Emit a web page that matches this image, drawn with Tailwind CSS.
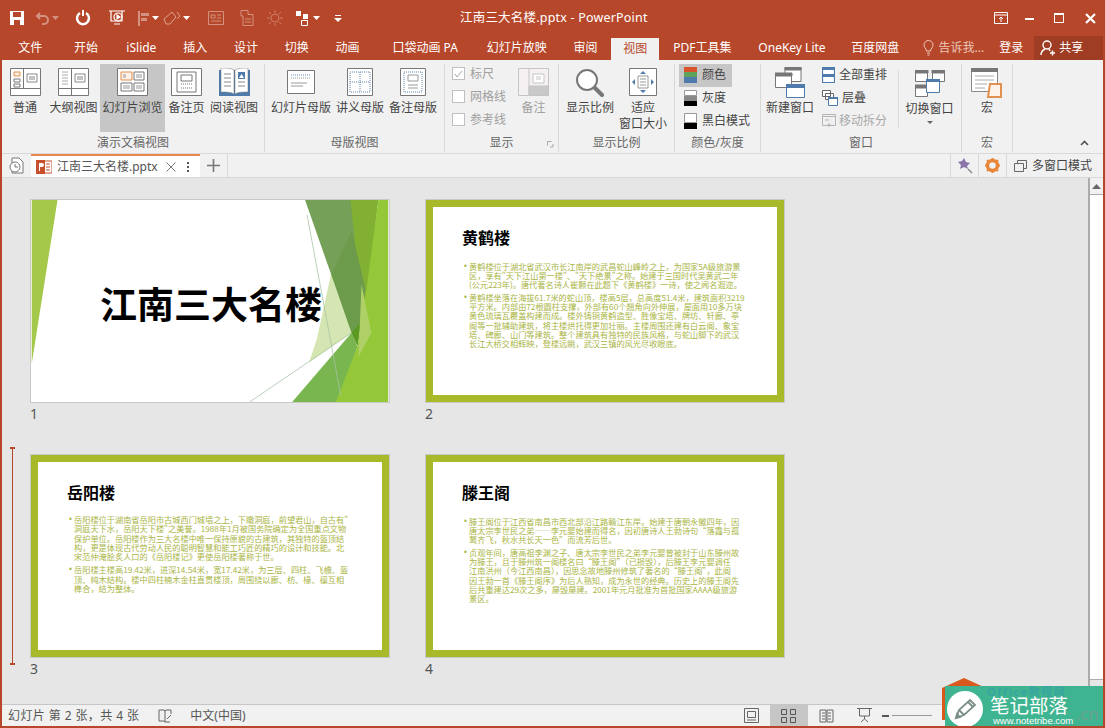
<!DOCTYPE html>
<html lang="zh-CN">
<head>
    <meta charset="UTF-8">
    <title>江南三大名楼.pptx - PowerPoint</title>
    <script src="https://cdn.jsdelivr.net/npm/@tailwindcss/browser@4"></script>
</head>
<body class="overflow-hidden bg-[#e6e6e6]">

<div class="relative w-[1105px] h-[728px] overflow-hidden flex flex-col border-x-2 border-b-2 border-[#b7472a] text-[12px] text-[#444] font-['Noto_Sans','Noto_Sans_CJK_SC',sans-serif]">

    <!-- Title bar -->
    <div class="h-[36px] shrink-0 bg-[#b7472a] flex items-center relative text-white">
        <div class="flex items-center h-full">
            <svg class="ml-[8px]" width="14" height="14" viewBox="0 0 14 14"><path d="M0 0h14v14H0z" fill="#fff"/><path d="M3 1h8v5H3z" fill="#b7472a"/><path d="M4 9h6v5H4z" fill="#b7472a"/></svg>
            <svg class="ml-[12px] opacity-40" width="14" height="14" viewBox="0 0 14 14" fill="none" stroke="#fff" stroke-width="2"><path d="M4 2 1 5l3 3M1 5h7a4 4 0 0 1 0 8H6"/></svg>
            <svg class="ml-[2px] opacity-40" width="7" height="5" viewBox="0 0 7 5"><path d="M0 0h7L3.500 4z" fill="#fff"/></svg>
            <svg class="ml-[16px]" width="16" height="16" viewBox="0 0 16 16" fill="none" stroke="#fff" stroke-width="2.500"><path d="M5 3a6 6 0 1 0 6 0"/><path d="M8 0v6" stroke-width="2"/></svg>
            <svg class="ml-[17px]" width="18" height="18" viewBox="0 0 18 18" fill="none" stroke="#fff" stroke-width="1.200"><path d="M1 2h16M3 2v10h11V2"/><circle cx="10" cy="8" r="4"/><path d="m9 6 3 2-3 2zM6 15h6" fill="#fff"/></svg>
            <svg class="ml-[11px] opacity-40" width="13" height="15" viewBox="0 0 13 15" fill="#fff"><path d="M1 0h2v15H1zM4 2h8v3H4zM4 7h6v3H4z"/></svg>
            <svg class="ml-[2px]" width="7" height="5" viewBox="0 0 7 5"><path d="M0 0h7L3.500 4z" fill="#fff"/></svg>
            <svg class="ml-[4px] opacity-50" width="18" height="16" viewBox="0 0 18 16" fill="none" stroke="#fff"><path d="M1 9 9 2l4 5-6 7H3zM14 2l3 4-3 3"/></svg>
            <svg class="ml-[2px]" width="7" height="5" viewBox="0 0 7 5"><path d="M0 0h7L3.500 4z" fill="#fff"/></svg>
            <svg class="ml-[18px] opacity-40" width="16" height="14" viewBox="0 0 16 14" fill="none" stroke="#fff"><path d="M.5.500h15v13H.5zM3 4h4v3H3zM9 4h4M9 7h4M3 10h10"/></svg>
            <svg class="ml-[14px] opacity-40" width="16" height="16" viewBox="0 0 16 16" fill="none" stroke="#fff"><path d="M3 .500h7v4h5v11H5V6H3zM7 9h6M7 12h6"/></svg>
            <svg class="ml-[13px] opacity-30" width="16" height="16" viewBox="0 0 16 16" fill="none" stroke="#fff"><circle cx="8" cy="8" r="4"/><path d="M8 0v3M8 13v3M0 8h3M13 8h3M2 2l2 2M12 12l2 2M14 2l-2 2M4 12l-2 2"/></svg>
            <svg class="ml-[13px]" width="14" height="15" viewBox="0 0 14 15"><path d="M0 0h5v5H0zM7 3h5v5H7z" fill="#fff"/><path d="M5.500 9.500h6v5h-6z" fill="none" stroke="#fff"/></svg>
            <svg class="ml-[3px]" width="7" height="5" viewBox="0 0 7 5"><path d="M0 0h7L3.500 4z" fill="#fff"/></svg>
            <svg class="ml-[14px]" width="8" height="7" viewBox="0 0 8 7"><path d="M1 0h6v1H1zM0 3h8L4 7z" fill="#fff"/></svg>
        </div>
        <div class="absolute left-[458px] top-[9px] text-[12.5px] tracking-[.2px] whitespace-nowrap">江南三大名楼.pptx - PowerPoint</div>
        <div class="ml-auto flex items-center h-full">
            <svg width="14" height="12" viewBox="0 0 14 12" fill="none" stroke="#fff"><path d="M.5.500h13v11H.5zM1 3h12" /><path d="M7 10V5M5 7l2-2 2 2"/></svg>
            <div class="ml-[17px] mt-[2px] w-[9px] h-[2px] bg-white"></div>
            <div class="ml-[20px] w-[10px] h-[10px] border border-white border-t-2"></div>
            <svg class="ml-[21px] mr-[7px]" width="11" height="11" viewBox="0 0 11 11" stroke="#fff" stroke-width="2.200"><path d="m1 1 9 9M10 1l-9 9"/></svg>
        </div>
    </div>

    <!-- Ribbon tabs -->
    <div class="h-[24px] shrink-0 bg-[#b7472a] flex text-white leading-[24px] whitespace-nowrap">
        <div class="w-[57px] text-center">文件</div>
        <div class="w-[55px] text-center">开始</div>
        <div class="w-[56px] text-center">iSlide</div>
        <div class="w-[52px] text-center">插入</div>
        <div class="w-[50px] text-center">设计</div>
        <div class="w-[52px] text-center">切换</div>
        <div class="w-[50px] text-center">动画</div>
        <div class="ml-[5px] w-[96px] text-center">口袋动画 PA</div>
        <div class="ml-[7px] w-[74px] text-center">幻灯片放映</div>
        <div class="ml-[8px] w-[48px] text-center">审阅</div>
        <div class="ml-[2px] w-[48px] mt-[2px] leading-[22px] text-center bg-[#f1f1f1] text-[#b7472a]">视图</div>
        <div class="ml-[14px] w-[58px] text-center">PDF工具集</div>
        <div class="ml-[26px] w-[70px] text-center">OneKey Lite</div>
        <div class="ml-[24px] w-[49px] text-center">百度网盘</div>
        <div class="ml-[23px] flex items-center text-[#edc8bb]">
            <svg width="11" height="16" viewBox="0 0 11 16" fill="none" stroke="#edc8bb"><path d="M3.500 11C3 8 1 7.500 1 5a4.500 4.500 0 0 1 9 0c0 2.500-2 3-2.500 6zM4 13h3M4.500 15h2"/></svg>
            <span class="ml-[5px]">告诉我...</span>
        </div>
        <div class="ml-[15px]">登录</div>
        <div class="ml-[11px] w-[69px] bg-[#9f3d24] flex items-center pl-[6px]">
            <svg width="16" height="16" viewBox="0 0 16 16" fill="none" stroke="#fff" stroke-width="1.400"><circle cx="7" cy="5" r="4"/><path d="M1 15c0-3 2-5 4-6M9 9l1 2M10 13h5M12.500 10.500v5"/></svg>
            <span class="ml-[3px]">共享</span>
        </div>
    </div>

    <!-- Ribbon -->
    <div class="h-[93px] shrink-0 bg-[#f1f1f1] flex pt-[4px] text-[#444]">

        <!-- 演示文稿视图 -->
        <div class="w-[263px] shrink-0 flex flex-col border-r border-[#d8d8d8] h-[88px]">
            <div class="h-[68px] flex pl-[1px]">
                <div class="w-[44px] flex flex-col items-center pt-[4px]">
                    <svg width="31" height="28" viewBox="0 0 31 28" fill="#fff" stroke="#777"><path d="M.5.500h30v27H.5z"/><path d="M.5 20.500h30M13.500 1v19"/><path d="M4 4h6v4H4z" stroke="#e0914f" fill="#fdf0e4"/><path d="M4 11h6v3H4zM4 16h6v3H4z"/><path d="M17 6h10v8H17zM19 9h6M19 11h6" stroke="#888"/></svg>
                    <div class="mt-[4px] leading-[16px] whitespace-nowrap">普通</div>
                </div>
                <div class="w-[53px] flex flex-col items-center pt-[4px]">
                    <svg width="31" height="28" viewBox="0 0 31 28" fill="#fff" stroke="#777"><path d="M.5.500h30v27H.5z"/><path d="M.5 20.500h30M13.500 1v26"/><path d="M4 4h6M4 7h6M4 10h6M4 13h6M4 16h6" stroke="#aaa"/><path d="M17 6h10v8H17zM19 9h6M19 11h6" stroke="#888"/></svg>
                    <div class="mt-[4px] leading-[16px] whitespace-nowrap">大纲视图</div>
                </div>
                <div class="w-[65px] flex flex-col items-center pt-[4px] bg-[#c6c6c6]">
                    <svg width="31" height="28" viewBox="0 0 31 28" fill="#fff" stroke="#777"><path d="M.5.500h30v27H.5z"/><path d="M4 4h11v8H4z" stroke="#e0914f" fill="#fdf0e4"/><path d="M17 4h10v8H17zM4 15h11v8H4zM17 15h10v8H17z"/><path d="M6 7h3M6 9h3M19 7h6M19 9h6M6 18h7M6 20h7M19 18h6M19 20h6" stroke="#999"/></svg>
                    <div class="mt-[4px] leading-[16px] whitespace-nowrap">幻灯片浏览</div>
                </div>
                <div class="w-[43px] flex flex-col items-center pt-[4px]">
                    <svg width="31" height="28" viewBox="0 0 31 28" fill="#fff" stroke="#777"><path d="M.5.500h30v27H.5z"/><path d="M6 4h19v20H6zM10 7h11v6H10z"/><path d="M10 16h11M10 20h11" stroke-dasharray="1 1"/></svg>
                    <div class="mt-[4px] leading-[16px] whitespace-nowrap">备注页</div>
                </div>
                <div class="w-[52px] flex flex-col items-center pt-[4px]">
                    <svg width="31" height="28" viewBox="0 0 31 28"><path d="M0 2h31v26H0z" fill="#4e7bab"/><path d="M2 0c5 0 10 0 13 2v24c-3-2-8-2-13-2zM29 0c-5 0-10 0-13 2v24c3-2 8-2 13-2z" fill="#fff" stroke="#777" stroke-width=".5"/><path d="M5 6h7M5 10h7M5 14h7M5 18h7M19 14h7M19 18h7" stroke="#888"/><path d="M19 4h7v7h-7z" fill="#4e7bab"/><path d="m20 10 2.500-4 2.500 4z" fill="#fff"/></svg>
                    <div class="mt-[4px] leading-[16px] whitespace-nowrap">阅读视图</div>
                </div>
            </div>
            <div class="mt-[3px] text-center text-[#666] leading-[16px]">演示文稿视图</div>
        </div>

        <!-- 母版视图 -->
        <div class="w-[180px] shrink-0 flex flex-col border-r border-[#d8d8d8] h-[88px]">
            <div class="h-[68px] flex pl-[3px]">
                <div class="w-[66px] flex flex-col items-center pt-[6px]">
                    <svg width="28" height="24" viewBox="0 0 28 24" fill="#fff" stroke="#777"><path d="M.5.500h27v23H.5z"/><path d="M4 5h20" stroke="#668cb4" stroke-dasharray="1 1"/><path d="M4 8h20" stroke="#999" stroke-dasharray="1 1"/><path d="M4 13h16M4 16h12" stroke="#999"/></svg>
                    <div class="mt-[6px] leading-[16px] whitespace-nowrap">幻灯片母版</div>
                </div>
                <div class="w-[52px] flex flex-col items-center pt-[4px]">
                    <svg width="26" height="28" viewBox="0 0 26 28" fill="#fff" stroke="#777"><path d="M.5.500h25v27H.5z"/><path d="M3 4h20v20H3zM13 4v20M3 14h20" stroke="#5f84ab" stroke-dasharray="1 1"/></svg>
                    <div class="mt-[4px] leading-[16px] whitespace-nowrap">讲义母版</div>
                </div>
                <div class="w-[54px] flex flex-col items-center pt-[4px]">
                    <svg width="26" height="28" viewBox="0 0 26 28" fill="#fff" stroke="#777"><path d="M.5.500h25v27H.5z"/><path d="M4 4h18v20H4z" stroke="#5f84ab" stroke-dasharray="1 1"/><path d="M8 7h10v6H8zM8 17h10M8 20h10" stroke="#999"/></svg>
                    <div class="mt-[4px] leading-[16px] whitespace-nowrap">备注母版</div>
                </div>
            </div>
            <div class="mt-[3px] text-center text-[#666] leading-[16px]">母版视图</div>
        </div>

        <!-- 显示 -->
        <div class="w-[114px] shrink-0 flex flex-col border-r border-[#d8d8d8] h-[88px] text-[#a0a0a0]">
            <div class="h-[68px] flex pl-[7px]">
                <div class="w-[63px] flex flex-col gap-[10px] pt-[3px]">
                    <div class="flex items-center h-[13px] gap-[5px]">
                        <div class="w-[13px] h-[13px] border border-[#c0c0c0] bg-white flex items-center justify-center">
                            <svg width="9" height="8" viewBox="0 0 9 8" fill="none" stroke="#aaa"><path d="m1 4 2 3 5-6"/></svg>
                        </div>
                        <span>标尺</span>
                    </div>
                    <div class="flex items-center h-[13px] gap-[5px]">
                        <div class="w-[13px] h-[13px] border border-[#c0c0c0] bg-white"></div>
                        <span>网格线</span>
                    </div>
                    <div class="flex items-center h-[13px] gap-[5px]">
                        <div class="w-[13px] h-[13px] border border-[#c0c0c0] bg-white"></div>
                        <span>参考线</span>
                    </div>
                </div>
                <div class="w-[37px] flex flex-col items-center pt-[4px]">
                    <svg width="31" height="28" viewBox="0 0 31 28" fill="#f5f0f2" stroke="#c5c5c5"><path d="M.5.500h30v27H.5z"/><path d="M11 .500v27"/><path d="M15 6h11v9H15z" fill="#fff"/><path d="M18 9h5M18 11h5"/><path d="M11 18h19v9H11z" fill="#c9c9c9"/></svg>
                    <div class="mt-[4px] leading-[16px] whitespace-nowrap">备注</div>
                </div>
            </div>
            <div class="mt-[3px] leading-[16px] relative text-center text-[#666]">显示
                <svg class="absolute right-[4px] bottom-[3px]" width="7" height="7" viewBox="0 0 7 7" fill="none" stroke="#aaa"><path d="M.5.500h4M.5.500v4M6 3v3H3"/></svg>
            </div>
        </div>

        <!-- 显示比例 -->
        <div class="w-[116px] shrink-0 flex flex-col border-r border-[#d8d8d8] h-[88px]">
            <div class="h-[68px] flex pl-[2px]">
                <div class="w-[58px] flex flex-col items-center pt-[4px]">
                    <svg width="30" height="29" viewBox="0 0 30 29" fill="none" stroke="#777"><circle cx="12" cy="12" r="10" stroke-width="2" fill="#fff"/><path d="m20 20 7 7" stroke-width="4" stroke-linecap="round"/></svg>
                    <div class="mt-[3px] leading-[16px] whitespace-nowrap">显示比例</div>
                </div>
                <div class="w-[48px] flex flex-col items-center pt-[4px]">
                    <svg width="28" height="28" viewBox="0 0 28 28" fill="#fff" stroke="#777"><path d="M.5.500h27v27H.5z"/><path d="M9 8h10v12H9zM11 11h6M11 14h6M11 17h6" stroke="#999"/><path d="m14 3 3 3h-6zM14 25l3-3h-6zM3 14l3-3v6zM25 14l-3-3v6z" fill="#4e7bab" stroke="none"/></svg>
                    <div class="mt-[4px] leading-[16px] text-center">适应<br>窗口大小</div>
                </div>
            </div>
            <div class="mt-[3px] text-center text-[#666] leading-[16px]">显示比例</div>
        </div>

        <!-- 颜色/灰度 -->
        <div class="w-[86px] shrink-0 flex flex-col border-r border-[#d8d8d8] h-[88px]">
            <div class="h-[68px] flex flex-col pl-[4px]">
                <div class="w-[53px] h-[23px] bg-[#c6c6c6] flex items-center gap-[5px] pl-[5px]">
                    <svg width="13" height="16" viewBox="0 0 13 16"><path d="M0 0h13v5H0z" fill="#d9542c"/><path d="M0 5h13v5H0z" fill="#5fa35a"/><path d="M0 10h13v6H0z" fill="#4e7bab"/></svg>
                    <span>颜色</span>
                </div>
                <div class="h-[23px] flex items-center gap-[5px] pl-[5px]">
                    <svg width="13" height="16" viewBox="0 0 13 16"><path d="M.5.500h12v5H.5z" fill="#fff" stroke="#999"/><path d="M0 6h13v5H0z" fill="#888"/><path d="M0 11h13v5H0z"/></svg>
                    <span>灰度</span>
                </div>
                <div class="h-[23px] flex items-center gap-[5px] pl-[5px] whitespace-nowrap">
                    <svg class="shrink-0" width="13" height="16" viewBox="0 0 13 16"><path d="M.5.500h12v9H.5z" fill="#fff" stroke="#999"/><path d="M0 10h13v6H0z"/></svg>
                    <span>黑白模式</span>
                </div>
            </div>
            <div class="mt-[3px] text-center text-[#666] leading-[16px]">颜色/灰度</div>
        </div>

        <!-- 窗口 -->
        <div class="w-[201px] shrink-0 flex flex-col border-r border-[#d8d8d8] h-[88px]">
            <div class="h-[68px] flex">
                <div class="w-[58px] flex flex-col items-center pt-[3px]">
                    <svg width="30" height="31" viewBox="0 0 30 31" fill="#fff" stroke="#777"><path d="M10 .500h16v14H10z"/><path d="M10 0h16v3H10z" fill="#777"/><path d="M.5 6.500h16v14H.5z"/><path d="M0 6h17v3H0z" fill="#777"/><path d="M11.500 17.500h18v13h-18z" stroke="#4e7bab"/><path d="M11 17h19v4H11z" fill="#4e7bab" stroke="none"/></svg>
                    <div class="mt-[2px] leading-[16px] whitespace-nowrap">新建窗口</div>
                </div>
                <div class="w-[79px] flex flex-col pl-[3px]">
                    <div class="h-[23px] flex items-center gap-[4px] whitespace-nowrap">
                        <svg class="shrink-0" width="13" height="16" viewBox="0 0 13 16" fill="#fff" stroke="#4e7bab" stroke-width="1.200"><path d="M.500.500h12v15H.500zM.500 7.500h12"/><path d="M0 0h13v3H0zM0 7h13v3H0z" fill="#4e7bab" stroke="none"/></svg>
                        <span>全部重排</span>
                    </div>
                    <div class="h-[23px] flex items-center gap-[4px]">
                        <svg width="16" height="16" viewBox="0 0 16 16" fill="#fff" stroke="#666"><path d="M.500.500h8v6h-8zM3.500 3.500h8v6h-8z"/><path d="M6.500 7.500h9v8h-9z" stroke="#4e7bab"/><path d="M6 7h10v2H6z" fill="#4e7bab" stroke="none"/></svg>
                        <span>层叠</span>
                    </div>
                    <div class="h-[23px] flex items-center gap-[3px] whitespace-nowrap text-[#a8a8a8]">
                        <svg class="shrink-0" width="14" height="14" viewBox="0 0 14 14" fill="none" stroke="#b5b5b5"><path d="M.5.500h13v11H.5zM0 2.500h14M3 6h4M7 9v4M5 11h4"/></svg>
                        <span>移动拆分</span>
                    </div>
                </div>
                <div class="h-[58px] mt-[6px] border-l border-[#dcdcdc] w-[62px] flex flex-col items-center">
                    <svg width="30" height="28" viewBox="0 0 30 28" fill="#fff" stroke="#777"><path d="M.5.500h12v11H.5zM17.500.500h12v11h-12zM.5 15.500h12v11H.5z"/><path d="M0 0h13v3H0zM17 0h13v3H17zM0 15h13v3H0z" fill="#777"/><path d="M11.500 9.500h13v13h-13z" stroke="#4e7bab"/><path d="M11 9h14v3H11z" fill="#4e7bab" stroke="none"/></svg>
                    <div class="mt-[3px] leading-[16px] whitespace-nowrap">切换窗口</div>
                    <svg class="mt-[4px]" width="6" height="4" viewBox="0 0 6 4"><path d="M0 0h6L3 3z" fill="#666"/></svg>
                </div>
            </div>
            <div class="mt-[3px] text-center text-[#666] leading-[16px]">窗口</div>
        </div>

        <!-- 宏 -->
        <div class="w-[51px] shrink-0 flex flex-col border-r border-[#d8d8d8] h-[88px]">
            <div class="h-[68px] flex flex-col items-center pt-[4px]">
                <svg width="32" height="30" viewBox="0 0 32 30"><path d="M.5.500h26v23H.5z" fill="#fff" stroke="#888"/><path d="M0 0h27v4H0z" fill="#777"/><path d="M4 8h19M4 12h19M4 16h12M4 20h10" stroke="#aaa"/><path d="M19 16h11v13H17z" fill="#fdf3e8" stroke="#e0914f" stroke-width="2"/></svg>
                <div class="mt-[2px] leading-[16px]">宏</div>
            </div>
            <div class="mt-[3px] text-center text-[#666] leading-[16px]">宏</div>
        </div>

        <svg class="ml-auto mr-[14px] mt-[76px]" width="9" height="6" viewBox="0 0 9 6" fill="none" stroke="#555" stroke-width="1.600"><path d="m1 5 3.500-3.500L8 5"/></svg>
    </div>

    <!-- Document tabs -->
    <div class="h-[25px] shrink-0 bg-[#f1f1f1] border-t border-[#d9d9d9] border-b flex items-stretch">
        <div class="w-[29px] flex items-center justify-center">
            <svg width="15" height="17" viewBox="0 0 15 17" fill="none" stroke="#777"><path d="M3 1h7l4 4v11H3z" fill="#fff"/><circle cx="6" cy="10" r="5" fill="#fff"/><path d="M6 7v3h3"/></svg>
        </div>
        <div class="w-[169px] bg-white border-t-2 border-[#e8874f] flex items-center pl-[5px]">
            <svg width="16" height="14" viewBox="0 0 16 14"><path d="M5 1h11v12H5z" fill="#fff" stroke="#c9502c"/><path d="M10 4h4M10 7h4M10 10h4" stroke="#c9502c"/><path d="M0 0h9v14H0z" fill="#c9502c"/><path d="M3 3h3a1.500 1.500 0 0 1 0 4H4v4H3z" fill="#fff"/></svg>
            <span class="ml-[5px] whitespace-nowrap text-[#555]">江南三大名楼.pptx</span>
            <svg class="ml-[8px]" width="10" height="10" viewBox="0 0 10 10" stroke="#777"><path d="m.5.500 9 9M9.500.500l-9 9"/></svg>
            <div class="ml-[11px] flex flex-col gap-[2px]">
                <div class="w-[2px] h-[2px] bg-[#555]"></div>
                <div class="w-[2px] h-[2px] bg-[#555]"></div>
                <div class="w-[2px] h-[2px] bg-[#555]"></div>
            </div>
        </div>
        <div class="w-[28px] flex items-center justify-center border-r border-[#d9d9d9]">
            <svg width="13" height="13" viewBox="0 0 13 13" stroke="#777" stroke-width="1.600"><path d="M6.500 0v13M0 6.500h13"/></svg>
        </div>
        <div class="ml-auto w-[28px] flex items-center justify-center border-l border-[#d9d9d9]">
            <svg width="16" height="16" viewBox="0 0 16 16"><path d="m7 0 2 4 4 1-3 3 1 3-4-2-4 2 1-4-3-3 4-1z" fill="#8a74a8"/><path d="m11 11 4 4" stroke="#888" stroke-width="1.500"/></svg>
        </div>
        <div class="w-[28px] flex items-center justify-center border-l border-[#d9d9d9]">
            <svg width="15" height="15" viewBox="0 0 15 15"><circle cx="7.500" cy="7.500" r="5" fill="none" stroke="#e8873a" stroke-width="3.500"/><path d="M7.500 0v3M7.500 12v3M0 7.500h3M12 7.500h3M2 2l2 2M11 11l2 2M13 2l-2 2M4 11l-2 2" stroke="#e8873a" stroke-width="2"/></svg>
        </div>
        <div class="w-[97px] flex items-center border-l border-[#d9d9d9] pl-[7px] whitespace-nowrap">
            <svg width="13" height="12" viewBox="0 0 13 12" fill="none" stroke="#666"><path d="M3.500 3V.500h9v8H10"/><path d="M.5 3.500h9v8h-9z" fill="#f1f1f1"/></svg>
            <span class="ml-[5px]">多窗口模式</span>
        </div>
    </div>

    <!-- Slide sorter -->
    <div class="flex-1 min-h-0 flex bg-[#e6e6e6] relative">
        <div class="flex-1 pl-[28px] pt-[21px] grid grid-cols-[360px_360px] grid-rows-[255px_255px] gap-x-[35px] content-start">

            <!-- slide 1 -->
            <div>
                <div class="relative w-[360px] h-[204px] bg-white border border-[#c9c9c9] overflow-hidden">
                    <svg class="absolute inset-0" width="358" height="202" viewBox="0 0 360 204">
                        <path d="M0 0h26L0 165z" fill="#a4c94a"/>
                        <path d="M303 71 323 134 280 164 288 140z" fill="#d5e6b3"/>
                        <path d="M276 0h47l14 90-8 57-6-13z" fill="#75a057"/>
                        <path d="M322 0h28l-10 90-3 60z" fill="#81b032"/>
                        <path d="M323 31 337 90 329 147 323 134 303 75z" fill="#6b9b4b"/>
                        <path d="M263 204 323 134l6 14-19 56z" fill="#7ab64f"/>
                        <path d="m323 134 9-10-3 23z" fill="#5b9a20"/>
                        <path d="M350 0h10v204h-53l22-56 9-58z" fill="#94c838"/>
                        <path d="M333 85 343 134 330 158z" fill="#afd067"/>
                        <path d="M278 15 312 197M220 204 323 134" stroke="#a9c4a6" stroke-width=".8" fill="none"/>
                    </svg>
                    <div class="absolute left-[69px] top-[83px] text-[37px] leading-[44px] font-bold text-black whitespace-nowrap">江南三大名楼</div>
                </div>
                <div class="mt-[1px] text-[14px] leading-[20px] text-[#555]">1</div>
            </div>

            <!-- slide 2 -->
            <div>
                <div class="w-[360px] h-[204px] bg-white border border-[#c9c9c9]">
                    <div class="w-full h-full border-[7px] border-[#a8b92a] bg-white pl-[29px] pr-[30px] pt-[21px]">
                        <div class="text-[16px] leading-[20px] font-bold text-black">黄鹤楼</div>
                        <div class="mt-[14px] ml-[2px] flex text-[8.2px] leading-[9.100px] text-[#aab545] font-['Noto_Sans_CJK_SC',sans-serif]"><span class="w-[5px] shrink-0 font-['Liberation_Sans',sans-serif]">•</span><p>黄鹤楼位于湖北省武汉市长江南岸的武昌蛇山峰岭之上，为国家5A级旅游景区，享有"天下江山第一楼"、"天下绝景"之称。始建于三国时代吴黄武二年(公元223年)。唐代著名诗人崔颢在此题下《黄鹤楼》一诗，使之闻名遐迩。</p></div>
                        <div class="mt-[4px] ml-[2px] flex text-[8.2px] leading-[9.100px] text-[#aab545] font-['Noto_Sans_CJK_SC',sans-serif]"><span class="w-[5px] shrink-0 font-['Liberation_Sans',sans-serif]">•</span><p>黄鹤楼坐落在海拔61.7米的蛇山顶，楼高5层，总高度51.4米，建筑面积3219平方米。内部由72根圆柱支撑，外部有60个翘角向外伸展，屋面用10多万块黄色琉璃瓦覆盖构建而成。楼外铸铜黄鹤造型、胜像宝塔、牌坊、轩廊、亭阁等一批辅助建筑，将主楼烘托得更加壮丽。主楼周围还建有白云阁、象宝塔、碑廊、山门等建筑。整个建筑具有独特的民族风格，与蛇山脚下的武汉长江大桥交相辉映，登楼远眺，武汉三镇的风光尽收眼底。</p></div>
                    </div>
                </div>
                <div class="mt-[1px] text-[14px] leading-[20px] text-[#555]">2</div>
            </div>

            <!-- slide 3 -->
            <div>
                <div class="w-[360px] h-[204px] bg-white border border-[#c9c9c9]">
                    <div class="w-full h-full border-[7px] border-[#a8b92a] bg-white pl-[29px] pr-[31px] pt-[21px]">
                        <div class="text-[16px] leading-[20px] font-bold text-black">岳阳楼</div>
                        <div class="mt-[12px] ml-[2px] flex text-[8.2px] leading-[9.300px] text-[#aab545] font-['Noto_Sans_CJK_SC',sans-serif]"><span class="w-[5px] shrink-0 font-['Liberation_Sans',sans-serif]">•</span><p>岳阳楼位于湖南省岳阳市古城西门城墙之上，下瞰洞庭，前望君山，自古有"<wbr>洞庭天下水，岳阳天下楼"之美誉。1988年1月被国务院确定为全国重点文物保护单位。岳阳楼作为三大名楼中唯一保持原貌的古建筑，其独特的盔顶结构，更是体现古代劳动人民的聪明智慧和能工巧匠的精巧的设计和技能。北宋范仲淹脍炙人口的《岳阳楼记》更使岳阳楼著称于世。</p></div>
                        <div class="mt-[4px] ml-[2px] flex text-[8.2px] leading-[9.300px] text-[#aab545] font-['Noto_Sans_CJK_SC',sans-serif]"><span class="w-[5px] shrink-0 font-['Liberation_Sans',sans-serif]">•</span><p>岳阳楼主楼高19.42米，进深14.54米，宽17.42米，为三层、四柱、飞檐、盔顶、纯木结构。楼中四柱楠木金柱直贯楼顶，周围绕以廊、枋、椽、檩互相榫合，结为整体。</p></div>
                    </div>
                </div>
                <div class="mt-[1px] text-[14px] leading-[20px] text-[#555]">3</div>
            </div>

            <!-- slide 4 -->
            <div>
                <div class="w-[360px] h-[204px] bg-white border border-[#c9c9c9]">
                    <div class="w-full h-full border-[7px] border-[#a8b92a] bg-white pl-[29px] pr-[34px] pt-[21px]">
                        <div class="text-[16px] leading-[20px] font-bold text-black">滕王阁</div>
                        <div class="mt-[14px] ml-[2px] flex text-[8.2px] leading-[9.100px] text-[#aab545] font-['Noto_Sans_CJK_SC',sans-serif]"><span class="w-[5px] shrink-0 font-['Liberation_Sans',sans-serif]">•</span><p>滕王阁位于江西省南昌市西北部沿江路赣江东岸。始建于唐朝永徽四年，因<br>唐太宗李世民之弟——李元婴始建而得名，因初唐诗人王勃诗句“落霞与孤<br>鹜齐飞，秋水共长天一色”而流芳后世。</p></div>
                        <div class="mt-[4px] ml-[2px] flex text-[8.2px] leading-[9.100px] text-[#aab545] font-['Noto_Sans_CJK_SC',sans-serif]"><span class="w-[5px] shrink-0 font-['Liberation_Sans',sans-serif]">•</span><p>贞观年间，唐高祖李渊之子、唐太宗李世民之弟李元婴曾被封于山东滕州故<br>为滕王，且于滕州筑一阁楼名曰“滕王阁”（已损毁），后滕王李元婴调任<br>江南洪州（今江西南昌），因思念故地滕州修筑了著名的“滕王阁”，此阁<br>因王勃一首《滕王阁序》为后人熟知，成为永世的经典。历史上的滕王阁先<br>后共重建达29次之多，屡毁屡建。2001年元月批准为首批国家AAAA级旅游<br>景区。</p></div>
                    </div>
                </div>
                <div class="mt-[1px] text-[14px] leading-[20px] text-[#555]">4</div>
            </div>
        </div>

        <!-- scrollbar -->
        <div class="w-[15px] shrink-0 flex flex-col border-l-2 border-[#ababab] pb-[24px]">
            <div class="h-[17px] bg-[#f1f1f1] flex items-center justify-center border-b border-[#ababab]">
                <svg width="9" height="5" viewBox="0 0 9 5"><path d="M0 5 4.500 0 9 5z" fill="#666"/></svg>
            </div>
            <div class="flex-1 bg-white border-b border-[#ababab]"></div>
        </div>

        <!-- insertion marker between slides -->
        <div class="absolute left-[7px] top-[269px] h-[218px] w-[7px] flex flex-col items-center">
            <div class="w-[5px] h-[2px] bg-[#b7472a]"></div>
            <div class="w-[1px] flex-1 bg-[#b7472a]"></div>
            <div class="w-[5px] h-[2px] bg-[#b7472a]"></div>
        </div>
    </div>

    <!-- Status bar -->
    <div class="h-[22px] shrink-0 bg-[#f1f1f1] border-t border-[#c6c6c6] flex items-center whitespace-nowrap text-[#555]">
        <span class="ml-[6px] tracking-[.4px]">幻灯片 第 2 张，共 4 张</span>
        <svg class="ml-[19px]" width="14" height="14" viewBox="0 0 14 14" fill="none" stroke="#666"><path d="M1 1h5l1 1v11l-1-1H1zM7 2l1-1h5v4M7 13h5"/><path d="m9 10 4-4"/></svg>
        <span class="ml-[18px]">中文(中国)</span>
        <div class="ml-[498px] flex items-center h-full">
            <svg width="15" height="15" viewBox="0 0 15 15" fill="none" stroke="#666"><path d="M.5.500h14v14H.5zM3.500 3.500h8v6h-8zM3 12h9"/></svg>
            <div class="ml-[11px] w-[38px] h-full bg-[#c6c6c6] flex items-center justify-center">
                <svg width="15" height="14" viewBox="0 0 15 14" fill="none" stroke="#555"><path d="M.5.500h5v5h-5zM9.500.500h5v5h-5zM.5 8.500h5v5h-5zM9.500 8.500h5v5h-5z"/></svg>
            </div>
            <svg class="ml-[11px]" width="15" height="14" viewBox="0 0 15 14" fill="none" stroke="#666"><path d="M1 1h6v12H1zM8 1h6v12H8zM3 4h3M3 7h3M3 10h3M9 4h3M9 7h3M9 10h3"/></svg>
            <svg class="ml-[23px]" width="15" height="15" viewBox="0 0 15 15" fill="none" stroke="#666"><path d="M0 .5h15M2.500 1v7h10V1M7.500 8v3M4 14l3.500-3 3.500 3"/></svg>
            <div class="ml-[10px] w-[7px] h-[2px] bg-[#555]"></div>
            <div class="ml-[3px] w-[40px] h-[1px] bg-[#999]"></div>
        </div>
    </div>

    <!-- Watermark stamped on the picture -->
    <div class="absolute right-[-2px] bottom-[-2px] w-[163px] h-[50px]">
        <svg class="absolute left-0 top-0" width="50" height="42" viewBox="0 0 50 42"><path d="M22 0 44 10v32H0V10z" fill="#d9591c"/></svg>
        <div class="absolute left-[3px] top-[8px] w-[160px] h-[42px] bg-[#3fb490] overflow-hidden">
            <div class="absolute left-[42px] top-[0px] text-[11px] leading-[12px] tracking-[1.500px] font-bold text-[#38a6a0] whitespace-nowrap">Office教程网</div>
            <div class="absolute right-[6px] top-[18px] text-[17px] leading-[20px] text-[#6d9f90] whitespace-nowrap">.cn</div>
            <div class="absolute left-[45px] top-[12px] text-[19.500px] leading-[16px] text-white whitespace-nowrap">笔记部落</div>
            <div class="absolute left-[48px] top-[29px] text-[9.500px] leading-[11px] font-['Liberation_Sans',sans-serif] text-white whitespace-nowrap">www.notetribe.com</div>
        </div>
        <div class="absolute left-[5px] top-[13px] w-[36px] h-[36px] rounded-full bg-white flex items-center justify-center">
            <svg width="24" height="24" viewBox="0 0 24 24" fill="none" stroke="#7c8f86" stroke-width="1.800"><path d="M3 21 6 13 17 3l5 5-11 10z"/><path d="m6 13 5 5M15 5l5 5"/><path d="M3 21l1-4 3 3z" fill="#7c8f86"/></svg>
        </div>
    </div>
</div>

</body>
</html>
